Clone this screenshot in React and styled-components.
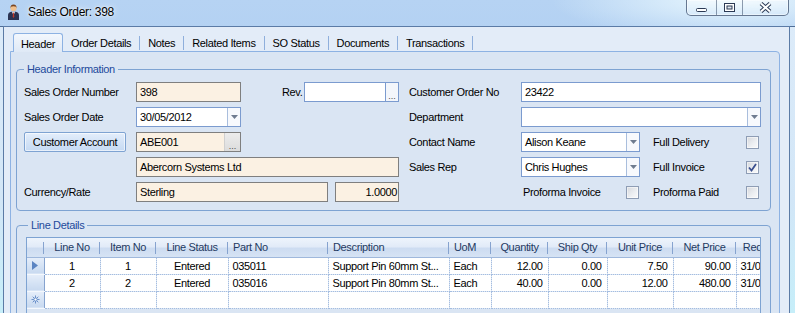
import React from 'react';
import styled, { createGlobalStyle, css } from 'styled-components';

const Global = createGlobalStyle`
  html, body { margin: 0; padding: 0; overflow: hidden; background: #a9cbef; }
  * { box-sizing: border-box; }
  body {
    font-family: "Liberation Sans", Arial, sans-serif;
    font-size: 11px;
    letter-spacing: -0.35px;
    color: #000;
  }
`;

const Window = styled.div`
  width: 795px;
  height: 313px;
  overflow: hidden;
  display: flex;
  flex-direction: column;
  background:
    radial-gradient(ellipse 180px 40px at 92% 0%, rgba(236, 250, 255, 0.95), rgba(236, 250, 255, 0) 100%),
    radial-gradient(ellipse 70px 30px at 8% 60%, rgba(225, 238, 252, 0.8), rgba(225, 238, 252, 0) 100%),
    radial-gradient(ellipse 160px 30px at 55% 100%, rgba(140, 185, 235, 0.7), rgba(140, 185, 235, 0) 100%),
    linear-gradient(180deg, #b6d3f3 0%, #9ec3ee 100%);
`;

const TitleBar = styled.div`
  height: 26px;
  flex: none;
  display: flex;
  align-items: flex-start;
  padding-left: 7px;
`;

const AppIcon = styled.svg`
  margin-top: 3px;
  flex: none;
`;

const Title = styled.div`
  margin-left: 8px;
  padding-top: 5px;
  font-size: 12px;
  line-height: 14px;
  letter-spacing: -0.3px;
  text-shadow: 0 0 6px rgba(255, 255, 255, 0.95), 0 0 2px rgba(255, 255, 255, 0.9);
`;

const Controls = styled.div`
  margin-left: auto;
  margin-right: 6px;
  height: 16px;
  display: flex;
  border: 1px solid rgba(58, 78, 108, 0.75);
  border-top: none;
  border-radius: 0 0 5px 5px;
  overflow: hidden;
  background: linear-gradient(180deg, rgba(255, 255, 255, 0.5), rgba(220, 236, 252, 0.25));
  box-shadow: inset 0 0 0 1px rgba(255, 255, 255, 0.45);
`;

const CtrlBtn = styled.div`
  width: ${p => p.$w}px;
  display: flex;
  align-items: center;
  justify-content: center;
  & + & { border-left: 1px solid rgba(58, 78, 108, 0.55); }
`;

const Frame = styled.div`
  flex: 1;
  display: flex;
  min-height: 0;
`;

const Edge = styled.div`
  width: ${p => p.$w}px;
  flex: none;
  background: linear-gradient(180deg, #dcebf9 0%, #d2e6f7 60%, #c6eef9 100%);
  border-top: 1px solid #4f6d96;
`;

const Client = styled.div`
  width: 787px;
  flex: none;
  display: flex;
  flex-direction: column;
  background: #e3ecf8;
  border: 1px solid #5b7ba6;
  border-bottom: none;
  padding: 6px 9px 0 6px;
`;

const TabStrip = styled.div`
  display: flex;
  align-items: flex-end;
  height: 19px;
  padding-left: 3px;
  margin-bottom: -1px;
  position: relative;
  z-index: 1;
`;

const Tab = styled.div`
  position: relative;
  height: 19px;
  display: flex;
  align-items: center;
  padding: 1px 9px 0 8px;
  white-space: nowrap;
  ${p => p.$active ? css`
    padding: 1px 7px 0 7px;
    border: 1px solid #8db2e3;
    border-bottom: none;
    border-radius: 3px 3px 0 0;
    background: linear-gradient(180deg, #f3f7fd 0%, #dfe9f6 100%);
  ` : css`
    &::after {
      content: '';
      position: absolute;
      right: 0;
      top: 3px;
      bottom: 2px;
      width: 1px;
      background: #8fafdc;
    }
  `}
`;

const TabPanel = styled.div`
  flex: 1;
  border: 1px solid #8db2e3;
  border-radius: 0 4px 0 0;
  background: #dae5f3;
  padding: 10px 8px 0 5px;
`;

const GroupBox = styled.fieldset`
  margin: ${p => p.$gap ? '7px 0 0 0' : '0'};
  min-width: 0;
  border: 1px solid #7ea3d2;
  border-radius: 4px;
  padding: ${p => p.$pad};
`;

const Legend = styled.legend`
  padding: 0 3px;
  margin-left: 2px;
  line-height: 14px;
  color: #224a9c;
`;

const FormGrid = styled.div`
  display: grid;
  grid-template-columns: 114px 105px 63px 95px 122px 119px 121px;
  grid-auto-rows: 20px;
  row-gap: 5px;
`;

const Label = styled.div`
  display: flex;
  align-items: center;
  white-space: nowrap;
  padding-left: ${p => p.$pl || 2}px;
  grid-column: ${p => p.$col || 'auto'};
`;

const Box = styled.div`
  grid-column: ${p => p.$col || 'auto'};
  display: flex;
  align-items: stretch;
  height: 20px;
  min-width: 0;
  border: 1px solid ${p => p.$ro ? '#7f7f7f' : '#7b9bcf'};
  background: ${p => p.$ro ? '#fbf1e3' : '#fff'};
  width: ${p => p.$w ? `${p.$w}px` : 'auto'};
  flex: ${p => p.$w ? 'none' : '1'};
`;

const BoxText = styled.div`
  flex: 1;
  display: flex;
  align-items: center;
  justify-content: ${p => p.$right ? 'flex-end' : 'flex-start'};
  padding: 0 ${p => p.$right ? '1px' : '2px'} 0 3px;
  white-space: nowrap;
  overflow: hidden;
`;

const DotsBtn = styled.div`
  width: ${p => p.$grey ? 16 : 13}px;
  flex: none;
  display: flex;
  align-items: flex-end;
  justify-content: center;
  padding-bottom: 1px;
  font-size: 9px;
  line-height: 8px;
  letter-spacing: 0;
  color: #4a4a4a;
  background: ${p => p.$grey ? 'linear-gradient(180deg,#ececec,#dcdcdc)' : '#f3f6fb'};
  border-left: 1px solid ${p => p.$grey ? '#d0d0d0' : '#7b9bcf'};
`;

const DropBtn = styled.div`
  width: 13px;
  flex: none;
  display: flex;
  align-items: center;
  justify-content: center;
  border-left: 1px solid #a9bedd;
  background: #f7f9fd;
`;

const Pair = styled.div`
  grid-column: ${p => p.$col};
  display: flex;
  gap: 7px;
`;

const AccountButton = styled.button`
  width: 102px;
  height: 20px;
  margin: 0;
  padding: 0;
  font: inherit;
  letter-spacing: inherit;
  color: #000;
  border: 1px solid #7ea3d2;
  border-radius: 2px;
  background: linear-gradient(180deg, #e4eefb 0%, #d3e3f7 50%, #c6daf3 100%);
  box-shadow: inset 0 0 0 1px rgba(255, 255, 255, 0.6);
`;

const CheckCell = styled.div`
  grid-column: ${p => p.$col || 'auto'};
  display: flex;
  align-items: center;
  justify-content: space-between;
  padding-left: ${p => p.$pl}px;
  padding-right: ${p => p.$pr}px;
  white-space: nowrap;
`;

const CheckBox = styled.span`
  width: 13px;
  height: 13px;
  flex: none;
  display: flex;
  align-items: center;
  justify-content: center;
  border: 1px solid #8e9db5;
  background: linear-gradient(135deg, #d5d8dd 0%, #eef0f3 60%, #fafafa 100%);
  box-shadow: inset 0 0 0 1px rgba(255, 255, 255, 0.5);
`;

const GridView = styled.div`
  height: 84px;
  overflow: hidden;
  border: 1px solid #7ea3d2;
  background: #dae5f3;
`;

const Table = styled.table`
  border-collapse: collapse;
  table-layout: fixed;
  width: 789px;
`;

const HeadCell = styled.th`
  position: relative;
  height: 19px;
  padding: 0 5px;
  font-weight: normal;
  color: #1f3a62;
  white-space: nowrap;
  overflow: hidden;
  text-align: ${p => p.$align};
  background: linear-gradient(180deg, #eef4fc 0%, #e2ebf8 45%, #cddcf1 55%, #d6e3f4 100%);
  border-bottom: 1px solid #9fb8dc;
  &::after {
    content: '';
    position: absolute;
    right: 0;
    top: 4px;
    bottom: 3px;
    width: 1px;
    background: #86a3cf;
  }
`;

const RowHead = styled.td`
  height: 17px;
  padding: 0;
  text-align: center;
  vertical-align: middle;
  background: linear-gradient(180deg, #e6eefa 0%, #d4e2f4 55%, #c8d9f0 100%);
  border-right: 1px solid #86a3cf;
  border-bottom: 1px solid #f4f8fd;
  line-height: 0;
`;

const Cell = styled.td`
  height: 17px;
  padding: ${p => p.$align === 'right' ? '0 5px 0 2px' : '0 4px'};
  background: #fff;
  text-align: ${p => p.$align};
  white-space: nowrap;
  overflow: hidden;
  border-right: 1px dotted #a5bde0;
  border-bottom: 1px dotted #a5bde0;
`;

const ArrowDown = () => (
  <svg width="7" height="4" viewBox="0 0 7 4"><path d="M0 0 L7 0 L3.5 4 Z" fill="#6f7c90" /></svg>
);

const Tick = () => (
  <svg width="9" height="9" viewBox="0 0 9 9"><path d="M1 4.5 L3.5 7.5 L8 1" fill="none" stroke="#3a4f8f" strokeWidth="1.8" /></svg>
);

const Combo = ({ col, value }) => (
  <Box $col={col}>
    <BoxText>{value}</BoxText>
    <DropBtn><ArrowDown /></DropBtn>
  </Box>
);

const Check = ({ label, checked, col, pl, pr }) => (
  <CheckCell $col={col} $pl={pl} $pr={pr}>
    <span>{label}</span>
    <CheckBox>{checked && <Tick />}</CheckBox>
  </CheckCell>
);

const columns = [
  { title: 'Line No', w: 56, align: 'center', h: 'center' },
  { title: 'Item No', w: 56, align: 'center', h: 'center' },
  { title: 'Line Status', w: 72, align: 'center', h: 'center' },
  { title: 'Part No', w: 100, align: 'left', h: 'left' },
  { title: 'Description', w: 121, align: 'left', h: 'left' },
  { title: 'UoM', w: 42, align: 'left', h: 'left' },
  { title: 'Quantity', w: 57, align: 'right', h: 'center' },
  { title: 'Ship Qty', w: 59, align: 'right', h: 'center' },
  { title: 'Unit Price', w: 66, align: 'right', h: 'center' },
  { title: 'Net Price', w: 63, align: 'right', h: 'center' },
  { title: 'Required Date', w: 80, align: 'left', h: 'center' },
];

const rows = [
  ['1', '1', 'Entered', '035011', 'Support Pin 60mm St...', 'Each', '12.00', '0.00', '7.50', '90.00', '31/05/2012'],
  ['2', '2', 'Entered', '035016', 'Support Pin 80mm St...', 'Each', '40.00', '0.00', '12.00', '480.00', '31/05/2012'],
];

const tabs = ['Header', 'Order Details', 'Notes', 'Related Items', 'SO Status', 'Documents', 'Transactions'];

export default function App() {
  return (
    <>
      <Global />
      <Window>
        <TitleBar>
          <AppIcon width="13" height="17" viewBox="0 0 13 17">
            <path d="M1 17 L1 12.5 Q1 9.2 4.2 8.8 L8.8 8.8 Q12 9.2 12 12.5 L12 17 Z" fill="#2a3352" />
            <path d="M5 8.8 L6.5 12.5 L8 8.8 Z" fill="#fff" />
            <path d="M6.1 9.6 L6.9 9.6 L7.3 13.8 L6.5 15 L5.7 13.8 Z" fill="#c0392b" />
            <circle cx="6.5" cy="5.2" r="3" fill="#f0c08e" />
            <path d="M3.4 5.4 Q3.2 1.6 6.5 1.5 Q9.8 1.6 9.6 5.4 L9 3.8 Q6.5 2.8 4 3.8 Z" fill="#7a4520" />
          </AppIcon>
          <Title>Sales Order: 398</Title>
          <Controls>
            <CtrlBtn $w={29}>
              <svg width="11" height="10" viewBox="0 0 11 10"><rect x="0.5" y="5.5" width="10" height="3" rx="1" fill="#fff" stroke="#2b3a55" /></svg>
            </CtrlBtn>
            <CtrlBtn $w={26}>
              <svg width="11" height="9" viewBox="0 0 11 9"><rect x="0.5" y="0.5" width="10" height="8" fill="#fff" stroke="#2b3a55" /><rect x="3" y="3" width="5" height="3" fill="#dfe6ef" stroke="#2b3a55" /></svg>
            </CtrlBtn>
            <CtrlBtn $w={46}>
              <svg width="13" height="11" viewBox="0 0 13 11">
                <path d="M2 1.5 L11 9.5 M11 1.5 L2 9.5" stroke="#2b3a55" strokeWidth="4" />
                <path d="M2 1.5 L11 9.5 M11 1.5 L2 9.5" stroke="#fff" strokeWidth="2" />
              </svg>
            </CtrlBtn>
          </Controls>
        </TitleBar>
        <Frame>
          <Edge $w={3} />
          <Client>
            <TabStrip>
              {tabs.map((t, i) => <Tab key={t} $active={i === 0}>{t}</Tab>)}
            </TabStrip>
            <TabPanel>
              <GroupBox $pad="6px 8px 8px 5px">
                <Legend>Header Information</Legend>
                <FormGrid>
                  <Label>Sales Order Number</Label>
                  <Box $ro><BoxText>398</BoxText></Box>
                  <Label $pl={41}>Rev.</Label>
                  <Box><BoxText /><DotsBtn>...</DotsBtn></Box>
                  <Label $pl={10}>Customer Order No</Label>
                  <Box $col="span 2"><BoxText>23422</BoxText></Box>

                  <Label>Sales Order Date</Label>
                  <Combo value="30/05/2012" />
                  <Label $col="5" $pl={10}>Department</Label>
                  <Combo col="span 2" value="" />

                  <Label $pl={0}><AccountButton>Customer Account</AccountButton></Label>
                  <Box $ro><BoxText>ABE001</BoxText><DotsBtn $grey>...</DotsBtn></Box>
                  <Label $col="5" $pl={10}>Contact Name</Label>
                  <Combo value="Alison Keane" />
                  <Check label="Full Delivery" pl={13} pr={2} />

                  <Box $ro $col="2 / span 3"><BoxText>Abercorn Systems Ltd</BoxText></Box>
                  <Label $pl={10}>Sales Rep</Label>
                  <Combo value="Chris Hughes" />
                  <Check label="Full Invoice" checked pl={13} pr={2} />

                  <Label>Currency/Rate</Label>
                  <Pair $col="span 3">
                    <Box $ro><BoxText>Sterling</BoxText></Box>
                    <Box $ro $w={64}><BoxText $right>1.0000</BoxText></Box>
                  </Pair>
                  <Check label="Proforma Invoice" col="6" pl={2} pr={1} />
                  <Check label="Proforma Paid" pl={13} pr={2} />
                </FormGrid>
              </GroupBox>
              <GroupBox $gap $pad="5px 9px 0 9px">
                <Legend>Line Details</Legend>
                <GridView>
                  <Table>
                    <colgroup>
                      <col style={{ width: 17 }} />
                      {columns.map(c => <col key={c.title} style={{ width: c.w }} />)}
                    </colgroup>
                    <thead>
                      <tr>
                        <HeadCell $align="center" />
                        {columns.map(c => <HeadCell key={c.title} $align={c.h}>{c.title}</HeadCell>)}
                      </tr>
                    </thead>
                    <tbody>
                      {rows.map((r, ri) => (
                        <tr key={ri}>
                          <RowHead>
                            {ri === 0 && (
                              <svg width="6" height="9" viewBox="0 0 6 9"><path d="M0 0 L6 4.5 L0 9 Z" fill="#5b84c2" /></svg>
                            )}
                          </RowHead>
                          {r.map((v, ci) => <Cell key={ci} $align={columns[ci].align}>{v}</Cell>)}
                        </tr>
                      ))}
                      <tr>
                        <RowHead>
                          <svg width="9" height="9" viewBox="0 0 9 9">
                            <path d="M4.5 0.5 V8.5 M0.5 4.5 H8.5 M1.7 1.7 L7.3 7.3 M7.3 1.7 L1.7 7.3" stroke="#6b91cb" strokeWidth="1" />
                            <circle cx="4.5" cy="4.5" r="1.6" fill="#fff" stroke="#6b91cb" />
                          </svg>
                        </RowHead>
                        {columns.map(c => <Cell key={c.title} $align={c.align} />)}
                      </tr>
                    </tbody>
                  </Table>
                </GridView>
              </GroupBox>
            </TabPanel>
          </Client>
          <Edge $w={5} />
        </Frame>
      </Window>
    </>
  );
}
